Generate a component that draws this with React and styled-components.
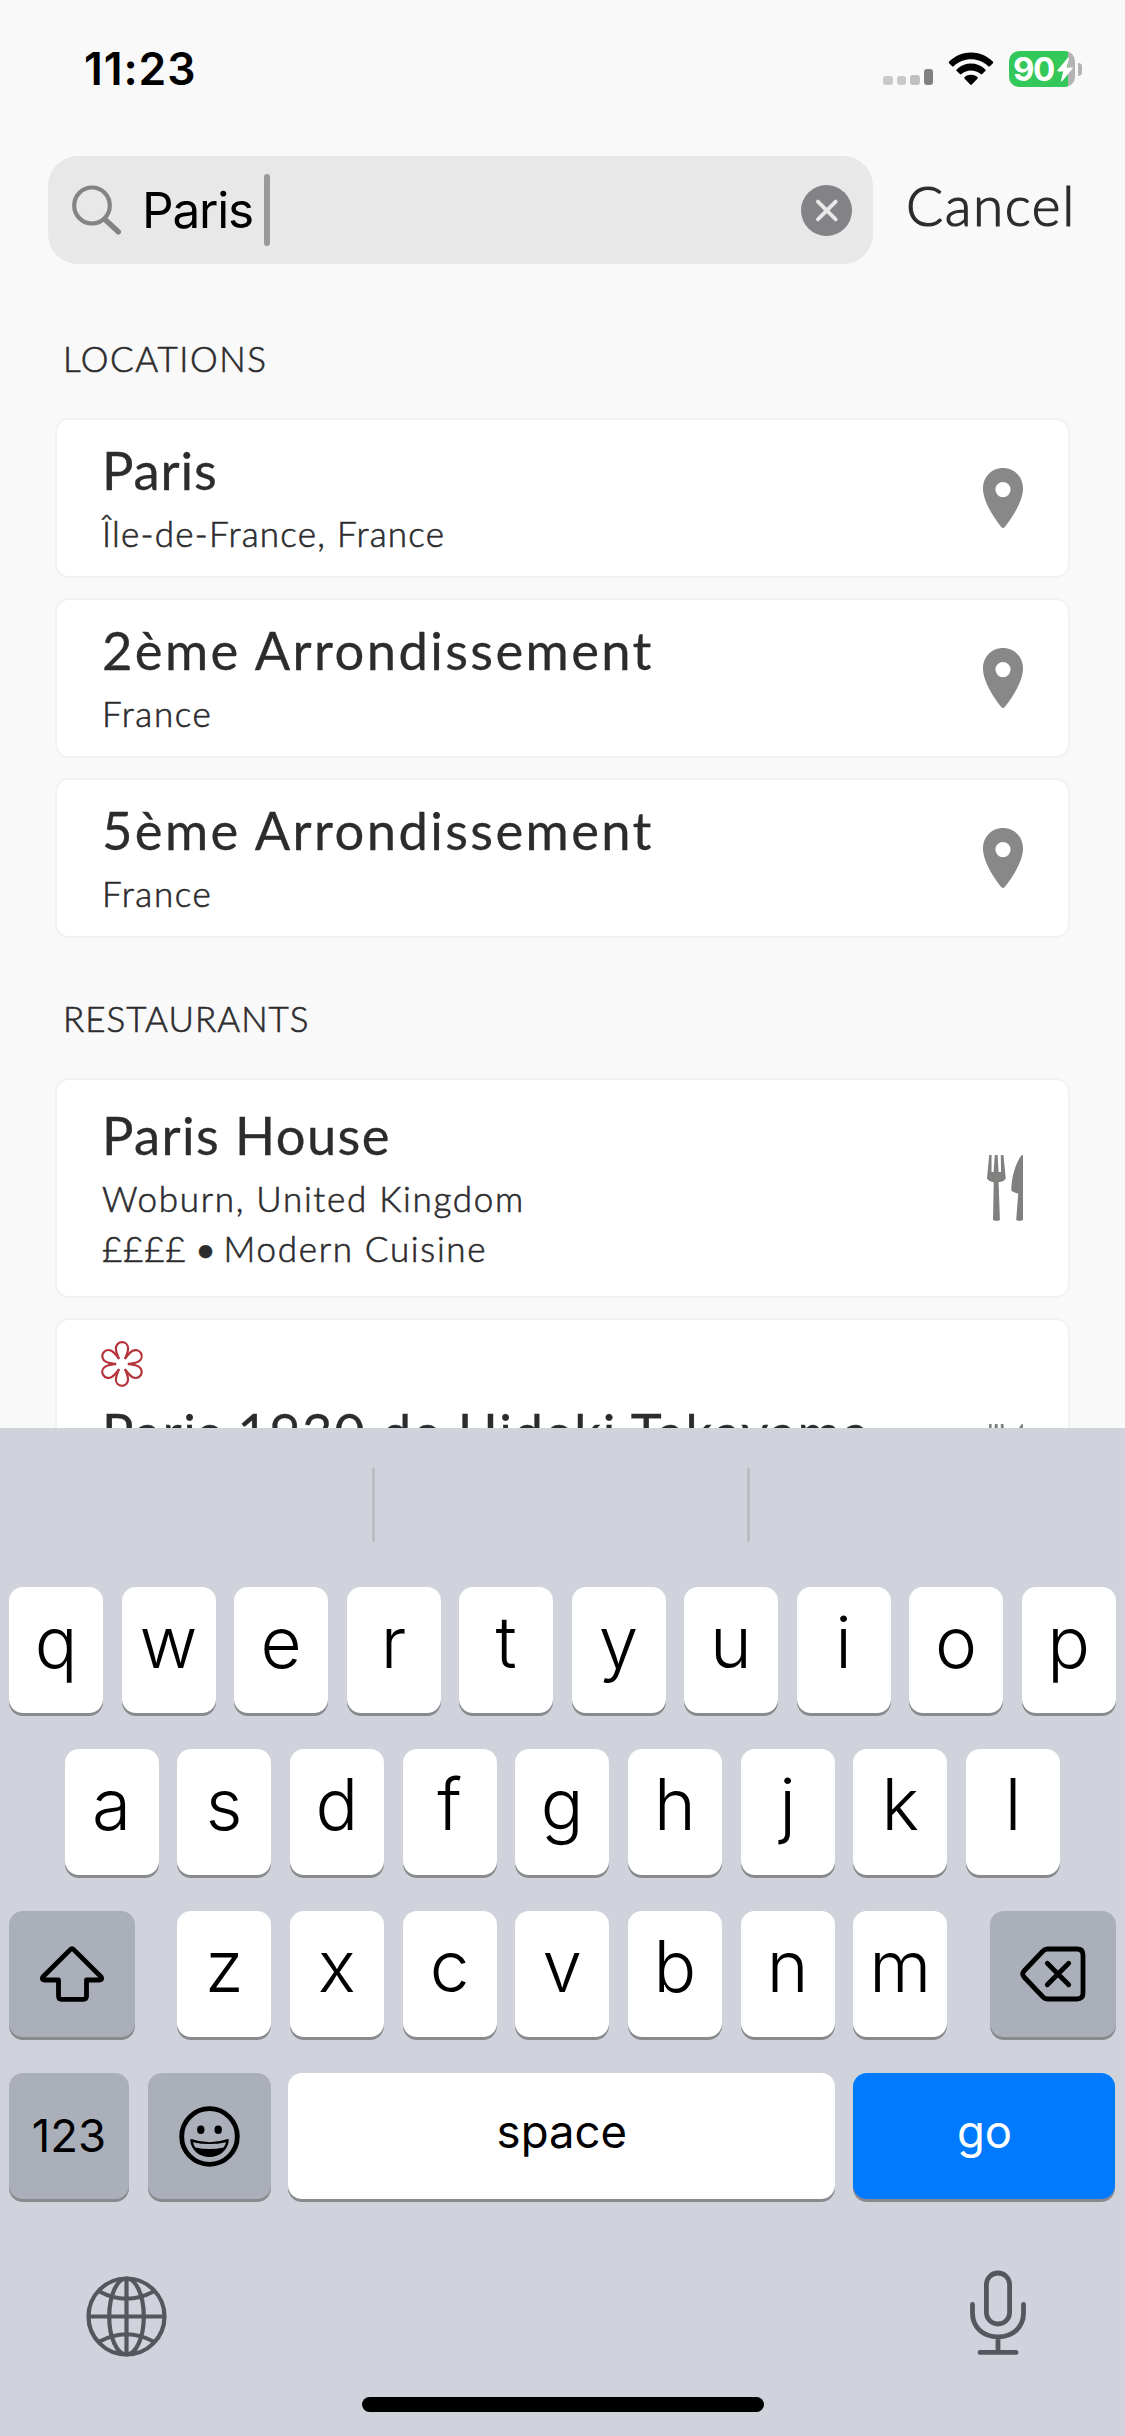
import React, { useState } from 'react';
import styled, { createGlobalStyle } from 'styled-components';

const GlobalStyle = createGlobalStyle`
  * {
    box-sizing: border-box;
  }

  body {
    margin: 0;
    background: #f9f9f9;
  }
`;

const Screen = styled.div`
  width: 1125px;
  height: 2436px;
  display: flex;
  flex-direction: column;
  overflow: hidden;
  background: #f9f9f9;
  color: #2c2c2e;
  font-family: Lato, 'Liberation Sans', sans-serif;
`;

const StatusBar = styled.header`
  height: 138px;
  padding: 0 43px 0 84px;
  display: flex;
  align-items: center;
  flex-shrink: 0;
`;

const Clock = styled.time`
  flex: 1;
  color: #000;
  font: 600 44.5px/60px Inter, sans-serif;
  letter-spacing: 0.9px;
`;

const SignalBars = styled.div`
  display: flex;
  align-items: flex-end;
  gap: 4px;
  height: 32px;
  margin-right: 15px;
`;

const Bar = styled.span`
  width: 9.5px;
  height: ${(props) => props.$height}px;
  border-radius: 3px;
  background: ${(props) => props.$color};
`;

const Battery = styled.div`
  display: flex;
  align-items: center;
  gap: 3px;
  margin-left: 15px;
`;

const BatteryBody = styled.div`
  width: 66px;
  height: 36px;
  padding-left: 4px;
  display: flex;
  align-items: center;
  gap: 3px;
  border-radius: 10px;
  background: linear-gradient(to right, #34c759 59px, #b3b3b3 59px);
  color: #fff;
  font: 700 33px/36px Inter, sans-serif;
  letter-spacing: -1.4px;
`;

const BatteryTip = styled.span`
  width: 4px;
  height: 13px;
  border-radius: 0 4px 4px 0;
  background: #b3b3b3;
`;

const SearchRow = styled.div`
  display: flex;
  align-items: center;
  height: 108px;
  margin-top: 18px;
  padding-left: 48px;
  flex-shrink: 0;
`;

const SearchField = styled.div`
  width: 825px;
  height: 108px;
  padding: 0 21px 0 24px;
  display: flex;
  align-items: center;
  border-radius: 30px;
  background: #e8e8e8;
`;

const Query = styled.span`
  margin-left: 20px;
  color: #000;
  font: 400 49.5px/60px Inter, sans-serif;
  letter-spacing: -1.2px;
`;

const Caret = styled.span`
  width: 6px;
  height: 72px;
  margin-left: 11px;
  margin-right: auto;
  border-radius: 3px;
  background: #999;
`;

const CancelButton = styled.button`
  margin-left: 33px;
  padding: 0 0 11px;
  border: none;
  background: none;
  color: #2c2c2e;
  font: 300 55px/60px Lato, sans-serif;
  letter-spacing: 1.6px;
  -webkit-text-stroke: 1.2px #2c2c2e;
`;

const Results = styled.main`
  flex: 1;
  min-height: 0;
  overflow: hidden;
  padding: 12px 57px 0;
`;

const SectionTitle = styled.h2`
  margin: 0;
  padding: 57px 0 37px 6px;
  font-size: 35px;
  font-weight: 300;
  line-height: 50px;
  letter-spacing: ${(props) => props.$spacing}px;
  -webkit-text-stroke: 0.6px #2c2c2e;
`;

const CardList = styled.div`
  display: flex;
  flex-direction: column;
  gap: 24px;
`;

const Card = styled.article`
  display: flex;
  align-items: center;
  height: ${(props) => props.$height}px;
  padding: 0 45px;
  border-radius: 12px;
  background: #fff;
  box-shadow: 0 0 0 2px #f2f2f2;
`;

const CardText = styled.div`
  flex: 1;
  align-self: flex-start;
  padding-top: ${(props) => props.$top}px;
  white-space: nowrap;
`;

const CardTitle = styled.h3`
  margin: 0 0 8px;
  font-size: 52.5px;
  font-weight: 400;
  line-height: 60px;
  letter-spacing: ${(props) => props.$spacing}px;
  -webkit-text-stroke: 0.3px #2c2c2e;
`;

const CardLine = styled.p`
  margin: 0;
  font-size: 35px;
  font-weight: 300;
  line-height: 50px;
  letter-spacing: ${(props) => props.$spacing}px;
  -webkit-text-stroke: 0.6px #2c2c2e;
`;

const Price = styled.span`
  letter-spacing: 0.8px;
  word-spacing: -4px;
`;

const Bullet = styled.span`
  font-size: 44px;
  line-height: 0;
  vertical-align: -3px;
  letter-spacing: -1px;
`;

const StarRow = styled.div`
  height: 61px;
  margin-left: -2px;
`;

const Keyboard = styled.section`
  height: 1008px;
  padding: 39px 9.5px 0 9px;
  display: flex;
  flex-direction: column;
  flex-shrink: 0;
  background: #d0d3db;
  font-family: Inter, 'Liberation Sans', sans-serif;
`;

const Suggestions = styled.div`
  display: flex;
  justify-content: space-between;
  height: 75px;
  margin-bottom: 45px;
  padding: 0 365.5px 0 363px;
`;

const Divider = styled.span`
  width: 3px;
  border-radius: 2px;
  background: #bbbdc2;
`;

const KeyRow = styled.div`
  display: flex;
  justify-content: space-between;
  height: 126px;
  margin-bottom: 36px;
  padding: 0 ${(props) => props.$inset || 0}px;
`;

const LetterGroup = styled.div`
  display: flex;
  justify-content: space-between;
  width: 770px;
`;

const keyColors = {
  light: ['#fff', '#000'],
  dark: ['#abafba', '#000'],
  blue: ['#007aff', '#fff'],
};

const Key = styled.button`
  width: ${(props) => props.$width || 94}px;
  height: 126px;
  margin-right: ${(props) => props.$gap || 0}px;
  padding: 0 0 ${(props) => props.$lift || 0}px;
  display: flex;
  align-items: center;
  justify-content: center;
  border: none;
  border-radius: 14px;
  background: ${(props) => keyColors[props.$tone || 'light'][0]};
  color: ${(props) => keyColors[props.$tone || 'light'][1]};
  box-shadow: 0 3px 0 #898a8d;
  font-family: inherit;
  font-size: ${(props) => (props.$small ? 45.5 : 71)}px;
  font-weight: ${(props) => (props.$small ? 400 : 350)};
  line-height: 90px;
`;

const KeyboardFooter = styled.div`
  display: flex;
  justify-content: space-between;
  align-items: flex-start;
  height: 162px;
  padding: 35px 89.5px 0 77px;
`;

const GlobeButton = styled.div`
  padding-top: 6px;
`;

const HomeBar = styled.div`
  width: 402px;
  height: 15px;
  margin: 0 auto 0 353px;
  border-radius: 8px;
  background: #000;
`;

const WifiIcon = () => (
  <svg width="46" height="34" viewBox="0 0 46 34">
    <path d="M1.2 9.6C13 -2.6 33 -2.6 44.8 9.6C45.3 10.1 45.3 10.7 44.9 11.2L41.9 14.2C41.4 14.7 40.8 14.7 40.3 14.2C30.8 5 15.2 5 5.7 14.2C5.2 14.7 4.6 14.7 4.1 14.2L1.1 11.2C.7 10.7 .7 10.1 1.2 9.6Z" />
    <path d="M8.7 17.4C16.7 9.6 29.3 9.6 37.3 17.4C37.8 17.9 37.8 18.5 37.3 19L34.2 22.1C33.7 22.6 33.1 22.6 32.6 22.1C27.2 17.2 18.8 17.2 13.4 22.1C12.9 22.6 12.3 22.6 11.8 22.1L8.7 19C8.2 18.5 8.2 17.9 8.7 17.4Z" />
    <path d="M16.6 25.1C20.3 22.1 25.7 22.1 29.4 25.1C29.9 25.6 29.9 26.2 29.4 26.7L23.8 32.6C23.3 33.1 22.7 33.1 22.2 32.6L16.6 26.7C16.1 26.2 16.1 25.6 16.6 25.1Z" />
  </svg>
);

const BoltIcon = () => (
  <svg width="16" height="25" viewBox="0 0 16 25" fill="#fff">
    <path d="M10.8.7.5 13.2c-.4.6-.1 1.2.5 1.2h5.2L4 23.6c-.2.9.6 1.2 1.1.6L15.5 11.7c.4-.6.1-1.2-.6-1.2H9.8L12 1.3c.2-.9-.6-1.2-1.2-.6Z" />
  </svg>
);

const SearchIcon = () => (
  <svg width="50" height="50" viewBox="0 0 50 50" fill="none" stroke="#838385">
    <ellipse cx="20" cy="20.5" rx="17.8" ry="18" strokeWidth="4.2" />
    <path d="M33 34.5 46.3 46.8" strokeWidth="5.4" strokeLinecap="round" />
  </svg>
);

const ClearIcon = () => (
  <svg width="51" height="51" viewBox="0 0 51 51">
    <circle cx="25.5" cy="25.5" r="25.5" fill="#838387" />
    <path d="m16.9 16.6 17.8 17.8M34.7 16.6 16.9 34.400" stroke="#e8e8e8" strokeWidth="3.800" strokeLinecap="round" />
  </svg>
);

const PinIcon = () => (
  <svg width="40" height="60" viewBox="0 0 40 60" fill="#888">
    <path
      fillRule="evenodd"
      d="M20 0C9 0 0 8.500 0 20.500C0 33 10.500 49.500 18.300 59C19.300 60.200 20.700 60.200 21.700 59C29.500 49.500 40 33 40 20.500C40 8.500 31 0 20 0ZM20 14a7.600 7.600 0 1 1 0 15.200a7.600 7.600 0 0 1 0-15.200Z"
    />
  </svg>
);

const CutleryIcon = () => (
  <svg width="36" height="66" viewBox="0 0 36 66" fill="#80807e">
    <path d="M2.200 0H4.600L4.500 17H6.600L7.800 0H10.600L11.600 17H14L13.800 0H16.400L18.800 23.500C18.200 25.500 15 26.800 11.600 27.200L12.900 64.800C12.300 66.300 6.600 66.300 6 64.800L6.700 27.200C4 26.800 .8 25.500 0 23.500Z" />
    <path d="M34.500.3Q36-.4 36 1V64.800C35.200 66.300 29.800 66.300 29.200 64.800L31.200 38.700C28.500 38.200 25.500 36.800 24.300 35.500C24.400 22 28.500 8.500 34.500.3Z" />
  </svg>
);

const StarIcon = () => {
  const petal = 'M18.900 18C17.300 13.500 15.900 11 15.900 7.700C15.900 3.800 18.600 1.200 22 1.200C25.400 1.200 28.100 3.800 28.100 7.700C28.100 11 26.700 13.500 25.100 18';
  return (
    <svg width="44" height="46" viewBox="0 0 44 46" fill="none" stroke="#b5333a" strokeWidth="2.200">
      {[0, 60, 120, 180, 240, 300].map((angle) => (
        <path key={angle} d={petal} transform={`rotate(${angle} 22 23)`} />
      ))}
    </svg>
  );
};

const ShiftIcon = () => (
  <svg width="64" height="56" viewBox="0 0 64 56" fill="none" stroke="#000" strokeWidth="4.800" strokeLinejoin="round">
    <path d="M30.300 3.600Q32 2 33.700 3.600L61 30.800Q63 34 59 34H46.500V50Q46.500 53.300 43.200 53.300H21.500Q18.500 53.300 18.500 50V34H5Q1 34 3 30.800Z" />
  </svg>
);

const BackspaceIcon = () => (
  <svg width="66" height="56" viewBox="0 0 66 56" fill="none" stroke="#000" strokeWidth="4.800" strokeLinejoin="round" strokeLinecap="round">
    <path d="M27.500 3H57Q63 3 63 9V47Q63 53 57 53H27.500Q25 53 23 51L4 31Q1.500 28 4 25L23 5Q25 3 27.500 3Z" />
    <path d="m27.300 17.300 21.400 21.400M48.700 17.300 27.300 38.700" />
  </svg>
);

const EmojiIcon = () => (
  <svg width="61" height="61" viewBox="0 0 61 61">
    <circle cx="30.500" cy="30.500" r="27.800" fill="none" stroke="#000" strokeWidth="4.800" />
    <ellipse cx="21.800" cy="23.700" rx="3.700" ry="4.200" />
    <ellipse cx="39.200" cy="23.700" rx="3.700" ry="4.200" />
    <path d="M12.400 33Q30.500 39.500 48.600 33Q50 32.800 49.800 34.500C48.700 44.500 40.500 51 30.500 51S12.300 44.500 11.200 34.500Q11 32.800 12.400 33Z" />
    <path d="M14 36.200Q30.500 40 47 36.200Q46.200 39.500 44.700 41.400Q30.500 44.500 16.300 41.400Q14.800 39.500 14 36.200Z" fill="#abafba" />
  </svg>
);

const GlobeIcon = () => (
  <svg width="81" height="81" viewBox="0 0 81 81" fill="none" stroke="#54575d" strokeWidth="4.200">
    <circle cx="40.500" cy="40.500" r="38" />
    <ellipse cx="40.500" cy="40.500" rx="17.300" ry="38" />
    <path d="M40.500 2.500V78.500M2.500 40.500H78.500M13.500 15.500Q40.500 30 67.500 15.500M13.500 65.500Q40.500 51 67.500 65.500" />
  </svg>
);

const MicIcon = () => (
  <svg width="56" height="86" viewBox="0 0 56 86" fill="none" stroke="#54575d" strokeWidth="4.800" strokeLinecap="round">
    <rect x="16.400" y="3" width="23.200" height="51" rx="11.600" />
    <path d="M2.500 34.500V43C2.500 57 13 66.800 28 66.800S53.500 57 53.500 43V34.500M28 67V82M10 82.400H46" />
  </svg>
);

const locations = [
  { name: 'Paris', region: 'Île-de-France, France', spacing: 0.9, regionSpacing: 1.25 },
  { name: '2ème Arrondissement', region: 'France', spacing: 2.4, regionSpacing: 1.6 },
  { name: '5ème Arrondissement', region: 'France', spacing: 2.4, regionSpacing: 1.6 },
];

const App = () => {
  const [query, setQuery] = useState('Paris');

  const type = (letter) => setQuery((prev) => prev + letter);

  const letterKey = (letter) => (
    <Key key={letter} onClick={() => type(letter)} $lift={17}>{letter}</Key>
  );

  return (
    <Screen>
      <GlobalStyle />
      <StatusBar>
        <Clock>11:23</Clock>
        <SignalBars>
          <Bar $height={9} $color="#c9c9c9" />
          <Bar $height={9} $color="#c9c9c9" />
          <Bar $height={10} $color="#c0c0c0" />
          <Bar $height={16} $color="#808080" />
        </SignalBars>
        <WifiIcon />
        <Battery>
          <BatteryBody>90<BoltIcon /></BatteryBody>
          <BatteryTip />
        </Battery>
      </StatusBar>

      <SearchRow>
        <SearchField>
          <SearchIcon />
          <Query>{query}</Query>
          <Caret />
          <ClearIcon />
        </SearchField>
        <CancelButton onClick={() => setQuery('')}>Cancel</CancelButton>
      </SearchRow>

      <Results>
        <SectionTitle $spacing={1.6}>LOCATIONS</SectionTitle>
        <CardList>
          {locations.map((item) => (
            <Card key={item.name} $height={156}>
              <CardText $top={20}>
                <CardTitle $spacing={item.spacing}>{item.name}</CardTitle>
                <CardLine $spacing={item.regionSpacing}>{item.region}</CardLine>
              </CardText>
              <PinIcon />
            </Card>
          ))}
        </CardList>

        <SectionTitle $spacing={1}>RESTAURANTS</SectionTitle>
        <CardList>
          <Card $height={216}>
            <CardText $top={25}>
              <CardTitle $spacing={1.4}>Paris House</CardTitle>
              <CardLine $spacing={1.7}>Woburn, United Kingdom</CardLine>
              <CardLine $spacing={1.7}>
                <Price>££££ <Bullet>•</Bullet> </Price>
                Modern Cuisine
              </CardLine>
            </CardText>
            <CutleryIcon />
          </Card>
          <Card $height={274}>
            <CardText $top={21}>
              <StarRow><StarIcon /></StarRow>
              <CardTitle $spacing={1.8}>Paris 1930 de Hideki Takayama</CardTitle>
            </CardText>
            <CutleryIcon />
          </Card>
        </CardList>
      </Results>

      <Keyboard>
        <Suggestions>
          <Divider />
          <Divider />
        </Suggestions>
        <KeyRow>{[...'qwertyuiop'].map(letterKey)}</KeyRow>
        <KeyRow $inset={55.5}>{[...'asdfghjkl'].map(letterKey)}</KeyRow>
        <KeyRow>
          <Key $width={126} $tone="dark"><ShiftIcon /></Key>
          <LetterGroup>{[...'zxcvbnm'].map(letterKey)}</LetterGroup>
          <Key $width={126} $tone="dark" onClick={() => setQuery((prev) => prev.slice(0, -1))}>
            <BackspaceIcon />
          </Key>
        </KeyRow>
        <KeyRow>
          <Key $width={120} $gap={2} $tone="dark" $small>123</Key>
          <Key $width={123} $tone="dark"><EmojiIcon /></Key>
          <Key $width={547} $gap={1} $small $lift={8} onClick={() => type(' ')}>space</Key>
          <Key $width={262} $tone="blue" $small $lift={8}>go</Key>
        </KeyRow>
        <KeyboardFooter>
          <GlobeButton><GlobeIcon /></GlobeButton>
          <MicIcon />
        </KeyboardFooter>
        <HomeBar />
      </Keyboard>
    </Screen>
  );
};

export default App;
